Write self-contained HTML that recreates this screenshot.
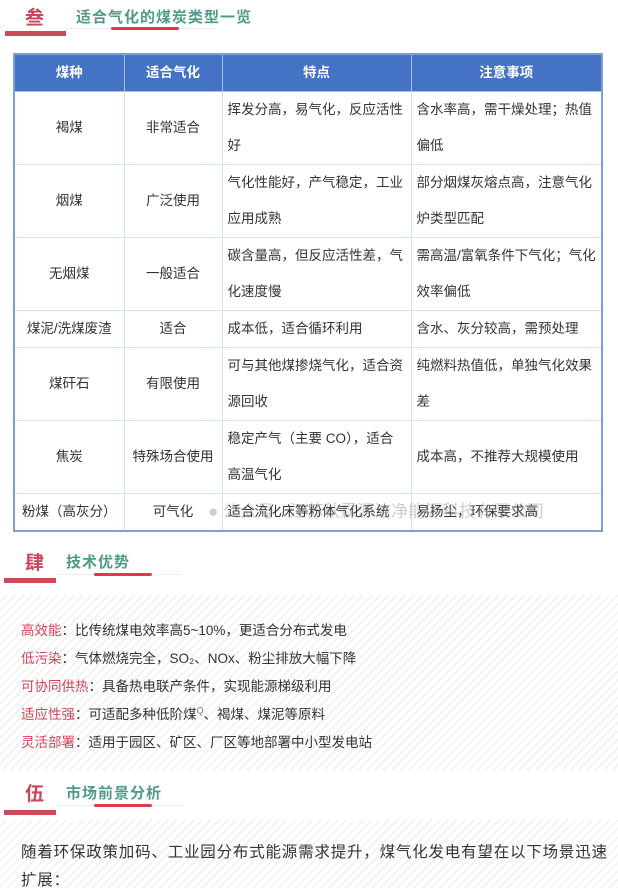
<!DOCTYPE html>
<html><head><meta charset="utf-8"><style>
body{margin:0;width:618px;height:888px;overflow:hidden;background:#fff;font-family:"Liberation Sans","Noto Sans CJK SC",sans-serif;color:#333;position:relative}
.abs{position:absolute}
.num{position:absolute;font-size:19px;font-weight:bold;color:#c9475a}
.ttl{position:absolute;font-size:15px;font-weight:bold;color:#4f9a8a;letter-spacing:1px}
.bar{position:absolute;height:5px;background:#c94b58}
.ul{position:absolute;height:3px;background:#e03a4a;border-radius:2px}
.hl{position:absolute;height:1px;background:#eee}
table{position:absolute;left:13px;top:53px;border-collapse:collapse;table-layout:fixed;font-size:13.5px;width:590px;border:2px solid #7da0d8}
td,th{border:1px solid #d6e3f3;padding:0 5px;line-height:36px;vertical-align:middle;word-break:break-all}
th{background:#4472c4;color:#fff;font-weight:bold;height:36px;border-color:#a5bfe6}
td.c{text-align:center}
.stripe{position:absolute;left:0;width:618px;background:repeating-linear-gradient(135deg,#fff 0 4px,#f3f3f3 4px 6px)}
.p{position:absolute;left:21px;font-size:13.5px;color:#333;white-space:nowrap}
.p b{font-weight:normal;color:#d0455a}
</style></head><body>
<div class="num" style="left:25px;top:3px">叁</div>
<div class="ttl" style="left:76px;top:6px">适合气化的煤炭类型一览</div>
<div class="hl" style="left:66px;top:28px;width:150px"></div>
<div class="ul" style="left:111px;top:27px;width:68px"></div>
<div class="bar" style="left:5px;top:31px;width:61px"></div>

<table>
<colgroup><col style="width:110px"><col style="width:98px"><col style="width:189px"><col></colgroup>
<tr><th>煤种</th><th>适合气化</th><th>特点</th><th>注意事项</th></tr>
<tr style="height:73px"><td class="c">褐煤</td><td class="c">非常适合</td><td>挥发分高，易气化，反应活性好</td><td>含水率高，需干燥处理；热值偏低</td></tr>
<tr style="height:73px"><td class="c">烟煤</td><td class="c">广泛使用</td><td>气化性能好，产气稳定，工业应用成熟</td><td>部分烟煤灰熔点高，注意气化炉类型匹配</td></tr>
<tr style="height:73px"><td class="c">无烟煤</td><td class="c">一般适合</td><td>碳含量高，但反应活性差，气化速度慢</td><td>需高温/富氧条件下气化；气化效率偏低</td></tr>
<tr style="height:36px"><td class="c" style="padding:0 1px">煤泥/洗煤废渣</td><td class="c">适合</td><td>成本低，适合循环利用</td><td>含水、灰分较高，需预处理</td></tr>
<tr style="height:73px"><td class="c">煤矸石</td><td class="c">有限使用</td><td>可与其他煤掺烧气化，适合资源回收</td><td>纯燃料热值低，单独气化效果差</td></tr>
<tr style="height:73px"><td class="c">焦炭</td><td class="c">特殊场合使用</td><td>稳定产气（主要 CO），适合高温气化</td><td>成本高，不推荐大规模使用</td></tr>
<tr style="height:36px"><td class="c" style="padding:0 1px">粉煤（高灰分）</td><td class="c">可气化</td><td>适合流化床等粉体气化系统</td><td>易扬尘，环保要求高</td></tr>
</table>
<div class="abs" style="left:208px;top:497px;font-size:17px;color:rgba(130,130,130,.4);white-space:nowrap">● 公众号 · 江苏秋霖源洁净能源科技有限公司</div>

<div class="num" style="left:25px;top:548px">肆</div>
<div class="ttl" style="left:66px;top:551px">技术优势</div>
<div class="hl" style="left:56px;top:574px;width:126px"></div>
<div class="ul" style="left:94px;top:573px;width:58px"></div>
<div class="bar" style="left:4px;top:578px;width:52px"></div>

<div class="stripe" style="top:595px;height:175px"></div>
<div class="p" style="top:619px"><b>高效能</b>：比传统煤电效率高5~10%，更适合分布式发电</div>
<div class="p" style="top:647px"><b>低污染</b>：气体燃烧完全，SO₂、NOx、粉尘排放大幅下降</div>
<div class="p" style="top:675px"><b>可协同供热</b>：具备热电联产条件，实现能源梯级利用</div>
<div class="p" style="top:703px"><b>适应性强</b>：可适配多种低阶煤<sup style="font-size:9px;color:#6a7fa0">Q</sup>、褐煤、煤泥等原料</div>
<div class="p" style="top:731px"><b>灵活部署</b>：适用于园区、矿区、厂区等地部署中小型发电站</div>

<div class="num" style="left:25px;top:779px">伍</div>
<div class="ttl" style="left:66px;top:782px">市场前景分析</div>
<div class="hl" style="left:56px;top:805px;width:126px"></div>
<div class="ul" style="left:94px;top:804px;width:58px"></div>
<div class="bar" style="left:4px;top:810px;width:52px"></div>

<div class="stripe" style="top:820px;height:68px"></div>
<div class="abs" style="left:21px;top:839px;width:596px;line-height:28px;font-size:15.5px;letter-spacing:0.8px;color:#333">随着环保政策加码、工业园分布式能源需求提升，煤气化发电有望在以下场景迅速扩展：</div>
</body></html>
